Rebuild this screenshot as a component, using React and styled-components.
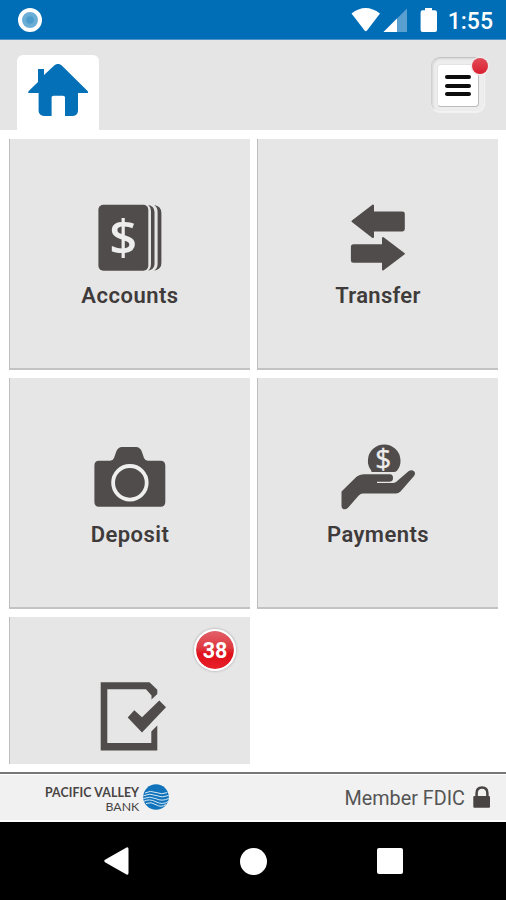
import React from "react";
import styled, { createGlobalStyle } from "styled-components";

const DARK = "#504c4b";

const HomeIcon = () => (
  <svg width="62" height="54" viewBox="0 0 62 54">
    <path
      fill="#0470b8"
      d="M11 5h6v6L27.500 1.300Q31-1.500 34.500 1.300L60.800 27.200Q61.600 29.100 60 29.100H51v17.900Q50.500 51.500 46 52H38V33.300Q38 31.700 36 31.700H26.500Q24.600 31.700 24.600 33.300V52H17Q12 51.500 11.600 47V29.100H2Q.6 29.100 1.500 27.200L11 18Z"
    />
  </svg>
);

const AccountsIcon = () => (
  <svg width="64" height="68" viewBox="0 0 64 68">
    <rect x=".4" y=".7" width="49.900" height="66" rx="5" fill={DARK} />
    <path
      fill={DARK}
      d="M50 .9Q56.500 2 56.500 8V60Q56.500 65.500 50 66.700Q53 64.500 53 60V8Q53 3 50 .9ZM56 .9Q63.400 2 63.400 9V59Q63.400 65.500 56 66.700Q59.600 64.500 59.600 60V8Q59.600 3 56 .9Z"
    />
    <text x="25.300" y="51.200" textAnchor="middle" fill="#ededed" fontFamily="Open Sans" fontWeight="600" fontSize="49">
      $
    </text>
  </svg>
);

const TransferIcon = () => (
  <svg width="56" height="68" viewBox="0 0 56 68">
    <g fill={DARK} stroke={DARK} strokeWidth="2" strokeLinejoin="round">
      <path d="M2.500 17.300L23 1.500V8.400H52.500Q53.800 8.400 53.800 10V25Q53.800 26.400 52.500 26.400H23V33.100Z" />
      <path d="M53.800 49.700L33 34V41.300H3.500Q1.900 41.300 1.900 43V56.200Q1.900 57.700 3.500 57.700H33V65.400Z" />
    </g>
  </svg>
);

const DepositIcon = () => (
  <svg width="72" height="62" viewBox="0 0 72 62">
    <path
      fill={DARK}
      d="M5 14.700H16Q19 14.700 20 12L22.300 5.500Q24 1 28 1H42Q46 1 47.800 5.500L50 12Q51 14.700 54 14.700H66.500Q71.300 14.700 71.300 19.500V56Q71.300 60.800 66.500 60.800H5Q.4 60.800 .4 56V19.500Q.4 14.700 5 14.700Z"
    />
    <circle cx="35.900" cy="36.800" r="16.800" fill="none" stroke="#efefef" strokeWidth="3.800" />
  </svg>
);

const PaymentsIcon = () => (
  <svg width="76" height="68" viewBox="0 0 76 68" overflow="visible">
    <path fill={DARK} d="M31.400 27.800A16.300 16.300 0 1 1 57 27.800Q55.500 29.300 53 29H31.400Z" />
    <text x="43.200" y="26.200" textAnchor="middle" fill="#ededed" fontFamily="Open Sans" fontSize="28" stroke="#ededed" strokeWidth=".4">
      $
    </text>
    <path
      fill={DARK}
      d="M1.500 48.500L16.500 33.800Q19.500 31.300 23.500 31.300H50Q53 31.300 53 35Q53 38.800 49.500 38.900H37V39.800H52Q54.800 39.800 56 38.900L68.500 28.300Q71.500 26 74 28.300Q76 30.500 74 33L60.500 48.500Q58.500 50.600 56 50.600H23Q20.500 50.600 18.500 52.700L8 64.800Q5.500 67 3 66Q1.500 65.200 1.500 63Z"
    />
    <path d="M37 39.300H53Q54.300 38.800 54.300 36" fill="none" stroke="#e6e6e6" strokeWidth="1.200" />
  </svg>
);

const ChecklistIcon = () => (
  <svg width="66" height="69" viewBox="0 0 66 69">
    <path
      fill={DARK}
      d="M.7 .3H49.500L57.300 7.800V12L51.500 17.500V13.500L46 7.300H7.300V61H51.300V49.500L57.300 43.500V68.600H.7Z"
    />
    <path fill={DARK} d="M27.700 35.400L34.300 28.200L42 35.300L59.300 18.500L66 25.300L42 50.600Z" />
  </svg>
);

const StatusIcons = () => (
  <svg width="86" height="26" viewBox="0 0 86 26" fill="#fff">
    <path d="M.5 6.500Q14.500-4.500 29 6.500L16 23.500Q14.800 25 13.600 23.500Z" />
    <path d="M56 1.500V25H32.500Z" opacity=".35" />
    <path d="M46 11.500V25H32.500Z" />
    <path d="M74 1h7v2.300h2.800Q86 3.300 86 5.500V23Q86 25 84 25H71.500Q69.600 25 69.600 23V5.500Q69.600 3.300 71.500 3.300H74Z" />
  </svg>
);

const BankMark = () => (
  <svg width="26" height="26" viewBox="0 0 26 26">
    <circle cx="13" cy="13" r="12.800" fill="#1173bb" />
    <g fill="none" stroke="#d5e8f5" strokeWidth="1">
      <path d="M2 9Q7 6 13 8.500T24.300 8.500" />
      <path d="M.5 11.700Q7 8.700 13 11.500T25.500 11.500" />
      <path d="M.4 14.500Q7 11.700 13 14.700T25.500 14.500" />
      <path d="M1 17.200Q6.500 14.400 13 17.800T25 17.600" />
      <path d="M3 19.500Q8 17.500 13 20.700T23 20.500" />
    </g>
  </svg>
);

const LockIcon = () => (
  <svg width="18" height="22" viewBox="0 0 18 22">
    <path d="M3.600 11V7.200Q3.600 1.400 9 1.400T14.400 7.200V11" fill="none" stroke="#484443" strokeWidth="2.500" />
    <rect x=".3" y="10" width="16.700" height="11.700" rx="1" fill="#484443" />
  </svg>
);

const tiles = [
  { label: "Accounts", icon: <AccountsIcon />, spacing: 0.5 },
  { label: "Transfer", icon: <TransferIcon />, spacing: 0.3 },
  { label: "Deposit", icon: <DepositIcon />, spacing: 0.45 },
  { label: "Payments", icon: <PaymentsIcon />, spacing: 0.45 },
  { icon: <ChecklistIcon />, badge: 38 },
];

const App = () => {
  return (
    <Screen>
      <GlobalStyle />
      <StatusBar>
        <Dot />
        <StatusRight>
          <StatusIcons />
          <Time>1:55</Time>
        </StatusRight>
      </StatusBar>

      <Header>
        <HomeTab>
          <HomeIcon />
        </HomeTab>
        <MenuFrame>
          <MenuButton>
            <Line />
            <Line />
            <Line />
          </MenuButton>
          <Alert />
        </MenuFrame>
      </Header>

      <Grid>
        {tiles.map(({ label, icon, badge, spacing }, i) => (
          <Tile key={i} $cut={!label}>
            <IconBox>{icon}</IconBox>
            {label && <Label $spacing={spacing}>{label}</Label>}
            {badge && <Badge>{badge}</Badge>}
          </Tile>
        ))}
      </Grid>

      <Footer>
        <Brand>
          <BrandText>
            <BrandName>PACIFIC VALLEY</BrandName>
            <BrandBank>BANK</BrandBank>
          </BrandText>
          <BankMark />
        </Brand>
        <Member>
          <MemberText>Member FDIC</MemberText>
          <LockIcon />
        </Member>
      </Footer>

      <NavBar>
        <svg width="25" height="28" viewBox="0 0 25 28">
          <path d="M1 12.800L22.500 .5Q24.500-.2 24.500 2V26Q24.500 28.200 22.500 27.500L1 15.200Q-.5 14 1 12.800Z" fill="#fff" />
        </svg>
        <NavCircle />
        <NavSquare />
      </NavBar>
    </Screen>
  );
};

export default App;

const GlobalStyle = createGlobalStyle`
  body {
    margin: 0;
    background: #fff;
  }
  * {
    box-sizing: border-box;
  }
  svg {
    display: block;
    flex: none;
  }
`;

const Screen = styled.div`
  width: 506px;
  height: 900px;
  display: flex;
  flex-direction: column;
  overflow: hidden;
  background: #fff;
  font-family: Roboto, "Liberation Sans", sans-serif;
`;

const StatusBar = styled.div`
  height: 40px;
  flex: none;
  display: flex;
  align-items: center;
  justify-content: space-between;
  padding: 0 13px 0 18px;
  background: #006db7;
  border-bottom: 1px solid #4b93c7;
`;

const Dot = styled.div`
  width: 24px;
  height: 24px;
  border-radius: 50%;
  border: 4.500px solid #fff;
  background: radial-gradient(circle, #4b9ccb 0 3px, #6bafd7 5px);
`;

const StatusRight = styled.div`
  display: flex;
  align-items: center;
  gap: 11px;
`;

const Time = styled.div`
  padding-top: 4px;
  color: #fff;
  font-size: 23px;
  font-weight: 500;
  line-height: 28px;
`;

const Header = styled.div`
  height: 90px;
  flex: none;
  display: flex;
  justify-content: space-between;
  padding: 15px 21px 0 17px;
  background: #e5e5e5;
`;

const HomeTab = styled.div`
  width: 82px;
  height: 75px;
  display: flex;
  justify-content: center;
  padding-top: 9px;
  background: #fff;
  border-radius: 6px 6px 0 0;
`;

const MenuFrame = styled.div`
  position: relative;
  width: 54px;
  height: 55px;
  margin-top: 2px;
  padding: 6px 5px;
  border: 1px solid #f3f3f3;
  border-top-color: #c4c4c4;
  border-left-color: #d0d0d0;
  border-radius: 9px;
  background: #ededed;
  box-shadow: inset 1px 1px 2px #d4d4d4, 0 1px 1px #f3f3f3;
`;

const MenuButton = styled.div`
  width: 42px;
  height: 43px;
  display: flex;
  flex-direction: column;
  align-items: center;
  justify-content: center;
  gap: 4.500px;
  background: #fff;
  border: 1px solid #e4e4e4;
  border-right-color: #bcbcbc;
  border-bottom-color: #bcbcbc;
  border-radius: 4px;
`;

const Line = styled.div`
  width: 26px;
  height: 4px;
  border-radius: 2px;
  background: #0c0c0c;
`;

const Alert = styled.div`
  position: absolute;
  top: 0;
  right: -4px;
  width: 16px;
  height: 16px;
  border-radius: 50%;
  background: linear-gradient(#e34b58, #d91f30);
  box-shadow: 0 0 0 1.500px #f0eaea;
`;

const Grid = styled.div`
  height: 642px;
  flex: none;
  display: grid;
  grid-template-columns: 241px 241px;
  grid-template-rows: 231px 231px 147px;
  gap: 8px 7px;
  padding: 9px 8px 0 9px;
`;

const Tile = styled.div`
  position: relative;
  display: flex;
  flex-direction: column;
  align-items: center;
  padding-top: 64px;
  padding-left: ${(props) => (props.$cut ? "5px" : "0")};
  background: #e6e6e6;
  border-left: 1px solid #bdbdbd;
  border-bottom: ${(props) => (props.$cut ? "none" : "2px solid #c3c3c3")};
`;

const IconBox = styled.div`
  height: 70px;
  display: flex;
  align-items: center;
`;

const Label = styled.div`
  margin-top: 9px;
  color: #3f3b3b;
  font-size: 22px;
  font-weight: 600;
  line-height: 28px;
  letter-spacing: ${(props) => props.$spacing}px;
`;

const Badge = styled.div`
  position: absolute;
  top: 12px;
  right: 14px;
  width: 42px;
  height: 42px;
  display: flex;
  align-items: center;
  justify-content: center;
  padding-top: 1px;
  border: 2px solid #fff;
  border-radius: 50%;
  background: linear-gradient(#e2616a 0%, #df3840 45%, #df1019 60%, #e8202a 100%);
  background-clip: padding-box;
  box-shadow: 0 0 2px 1px #c4c4c4;
  color: #fff;
  font-size: 21.500px;
  font-weight: 700;
`;

const Footer = styled.div`
  height: 50px;
  flex: none;
  display: flex;
  justify-content: space-between;
  padding: 0 15px 0 45px;
  background: #f1f1f1;
  border-top: 2px solid #777;
  box-shadow: inset 0 -2px 0 #fff, inset 0 1px 0 #fff;
`;

const Brand = styled.div`
  display: flex;
  gap: 4px;
  padding-top: 10px;
`;

const BrandText = styled.div`
  display: flex;
  flex-direction: column;
  align-items: flex-end;
  color: #484443;
  font-family: Lato, sans-serif;
`;

const BrandName = styled.div`
  padding-top: 2px;
  font-size: 12.300px;
  font-weight: 700;
  letter-spacing: 0.120px;
  line-height: 14px;
`;

const BrandBank = styled.div`
  font-size: 12.300px;
  line-height: 13px;
`;

const Member = styled.div`
  display: flex;
  gap: 8px;
  padding-top: 12px;
`;

const MemberText = styled.div`
  padding-top: 1px;
  color: #555;
  font-size: 19.800px;
  line-height: 24px;
`;

const NavBar = styled.div`
  height: 78px;
  display: flex;
  align-items: center;
  justify-content: space-between;
  padding: 0 103px 0 104px;
  background: #000;
`;

const NavCircle = styled.div`
  width: 27px;
  height: 27px;
  border-radius: 50%;
  background: #fff;
`;

const NavSquare = styled.div`
  width: 26px;
  height: 26px;
  border-radius: 2px;
  background: #fff;
`;
